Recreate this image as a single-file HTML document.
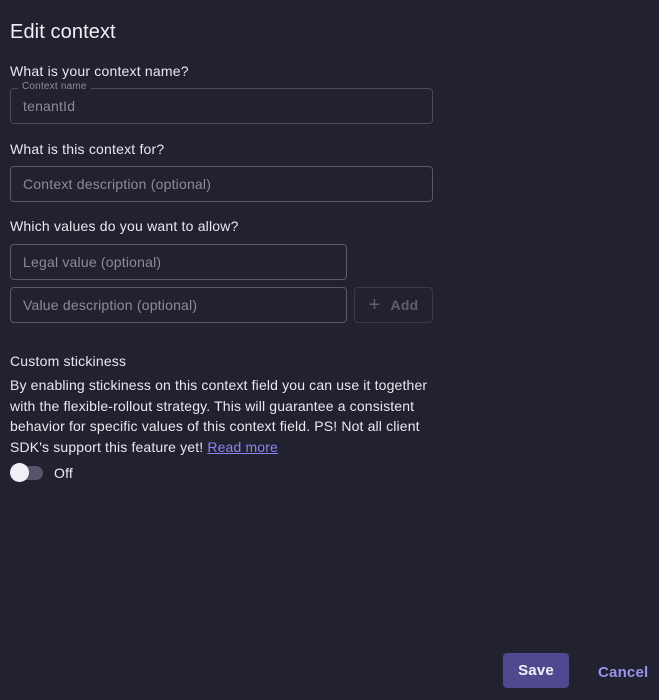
<!DOCTYPE html>
<html><head><style>
*{box-sizing:border-box;margin:0;padding:0}
body{width:659px;height:700px;background:#222130;font-family:"Liberation Sans",sans-serif;color:#ececf1;position:relative;overflow:hidden;letter-spacing:0.2px}
.a{position:absolute}
.lbl{font-size:14px;color:#e8e8ee}
.inp{position:absolute;border:1px solid #5a5870;border-radius:4px;font-size:14px;color:#8c8b9c;padding-left:12px;display:flex;align-items:center}
</style></head><body>
<div class="a" style="left:10px;top:21px;font-size:20px;color:#f0f0f4;letter-spacing:0.1px">Edit context</div>
<div class="a lbl" style="left:10px;top:63px">What is your context name?</div>
<div class="inp" style="left:10px;top:88px;width:423px;height:36px;border-color:#4a4960">tenantId</div>
<div class="a" style="left:18px;top:81px;padding:0 4px;background:#222130;font-size:10px;color:#8c8b9c">Context name</div>
<div class="a lbl" style="left:10px;top:141px">What is this context for?</div>
<div class="inp" style="left:10px;top:166px;width:423px;height:36px">Context description (optional)</div>
<div class="a lbl" style="left:10px;top:218px">Which values do you want to allow?</div>
<div class="inp" style="left:10px;top:244px;width:337px;height:36px">Legal value (optional)</div>
<div class="inp" style="left:10px;top:287px;width:337px;height:36px">Value description (optional)</div>
<div class="a" style="left:354px;top:287px;width:79px;height:36px;border:1px solid #3a394c;border-radius:4px;color:#5f5e70;font-size:14px;font-weight:bold;display:flex;align-items:center;justify-content:center;gap:10px"><span style="font-weight:normal;font-size:20px">+</span>Add</div>
<div class="a lbl" style="left:10px;top:353px">Custom stickiness</div>
<div class="a" style="left:10px;top:375px;width:435px;font-size:14px;line-height:20.5px;color:#e8e8ee;letter-spacing:0.15px">By enabling stickiness on this context field you can use it together with the flexible-rollout strategy. This will guarantee a consistent behavior for specific values of this context field. PS! Not all client SDK's support this feature yet! <span style="color:#8c85f0;text-decoration:underline">Read more</span></div>
<div class="a" style="left:13px;top:466px;width:30px;height:14px;border-radius:7px;background:#55546a"></div>
<div class="a" style="left:10px;top:463px;width:19px;height:19px;border-radius:50%;background:#f0eff8"></div>
<div class="a" style="left:54px;top:465px;font-size:14px">Off</div>
<div class="a" style="left:503px;top:653px;width:66px;height:35px;border-radius:4px;background:#4f4a8f;color:#f0f0f6;font-weight:bold;font-size:15px;display:flex;align-items:center;justify-content:center">Save</div>
<div class="a" style="left:598px;top:664px;color:#9a92f0;font-weight:bold;font-size:15px">Cancel</div>
</body></html>
